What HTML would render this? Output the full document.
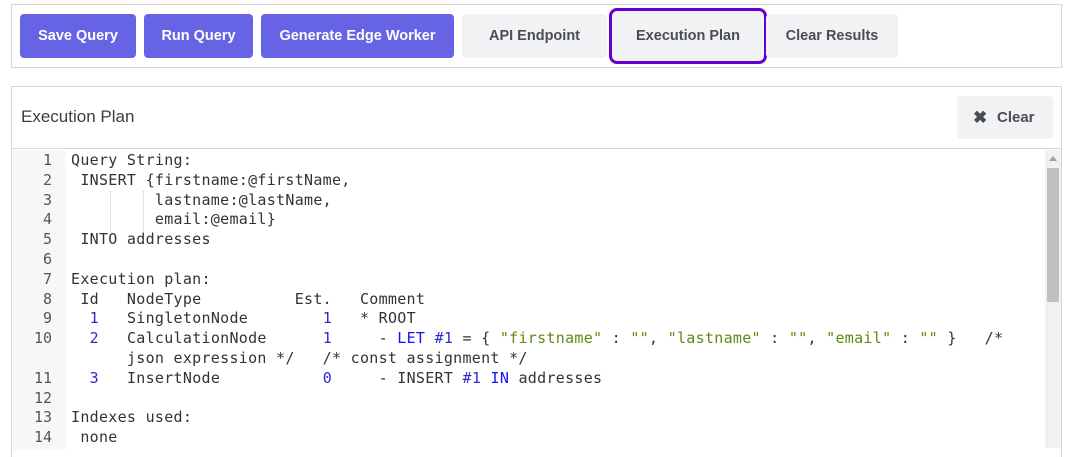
<!DOCTYPE html>
<html><head><meta charset="utf-8"><style>
body{margin:0;width:1070px;height:448px;background:#fff;overflow:hidden;font-family:"Liberation Sans",sans-serif;position:relative}
.top{position:absolute;left:11px;top:4px;width:1049px;height:62px;border:1px solid #d5d6db}
.b{position:absolute;top:14px;height:44px;border-radius:4px;font-weight:bold;font-size:14.5px;line-height:44px;text-align:center;box-sizing:border-box}
.p{background:#6664e4;color:#fff}
.g{background:#f1f2f4;color:#4a4d55}
.panel{position:absolute;left:11px;top:86px;width:1049px;height:370px;border:1px solid #d5d6db;border-bottom:none}
.hdr{position:absolute;left:21px;top:107px;font-size:17px;color:#3a3d45}
.hline{position:absolute;left:12px;top:148px;width:1049px;height:1px;background:#d5d6db}
.clr{position:absolute;left:957px;top:96px;width:96px;height:43px;background:#f1f2f4;border-radius:4px;color:#4a4d55;font-weight:bold;font-size:15px;line-height:43px}
.gut{position:absolute;left:12px;top:150px;width:54px;height:300px;background:#f7f7f7}
.code{position:absolute;left:71px;top:151px;font-family:"DejaVu Sans Mono","Liberation Mono",monospace;font-size:15px;letter-spacing:0.29px;line-height:19.8px;color:#333;white-space:pre}
.ln{position:absolute;left:12px;top:151px;width:40px;text-align:right;font-family:"DejaVu Sans Mono","Liberation Mono",monospace;font-size:15px;line-height:19.8px;color:#555;white-space:pre}
.n{color:#2b2bd0}.k{color:#1111ff}.s{color:#5f8a10}
.sb{position:absolute;left:1045px;top:150px;width:16px;height:298px;background:#f1f1f1}
.th{position:absolute;left:1047px;top:168px;width:12px;height:134px;background:#c1c1c1}
.guide{position:absolute;width:0;border-left:1px dotted #ccc;top:191px;height:40px}
</style></head><body>
<div class="top"></div>
<div class="b p" style="left:20px;width:116px">Save Query</div>
<div class="b p" style="left:144px;width:109px">Run Query</div>
<div class="b p" style="left:261px;width:193px">Generate Edge Worker</div>
<div class="b g" style="left:462px;width:145px">API Endpoint</div>
<div class="b g" style="left:609px;top:8px;width:158px;height:56px;border:3px solid #6600cc;border-radius:8px;line-height:50px">Execution Plan</div>
<div class="b g" style="left:766px;width:132px">Clear Results</div>
<div class="panel"></div>
<div class="hdr">Execution Plan</div>
<div class="clr"><span style="position:absolute;left:16px;font-size:17px">✖</span><span style="position:absolute;left:40px">Clear</span></div>
<div class="hline"></div>
<div class="gut"></div>
<div class="ln">1
2
3
4
5
6
7
8
9
10

11
12
13
14</div>
<div class="guide" style="left:110px"></div>
<div class="guide" style="left:143px"></div>
<div class="code">Query String:
 INSERT {firstname:@firstName,
         lastname:@lastName,
         email:@email}
 INTO addresses

Execution plan:
 Id   NodeType          Est.   Comment
  <span class="n">1</span>   SingletonNode        <span class="n">1</span>   * ROOT
  <span class="n">2</span>   CalculationNode      <span class="n">1</span>     - <span class="k">LET</span> <span class="n">#1</span> = { <span class="s">"firstname"</span> : <span class="s">""</span>, <span class="s">"lastname"</span> : <span class="s">""</span>, <span class="s">"email"</span> : <span class="s">""</span> }   /*
      json expression */   /* const assignment */
  <span class="n">3</span>   InsertNode           <span class="n">0</span>     - INSERT <span class="n">#1</span> <span class="k">IN</span> addresses

Indexes used:
 none</div>
<div class="sb"></div>
<div style="position:absolute;left:1049px;top:156px;width:0;height:0;border-left:4px solid transparent;border-right:4px solid transparent;border-bottom:5px solid #a0a0a0"></div>
<div class="th"></div>
</body></html>
